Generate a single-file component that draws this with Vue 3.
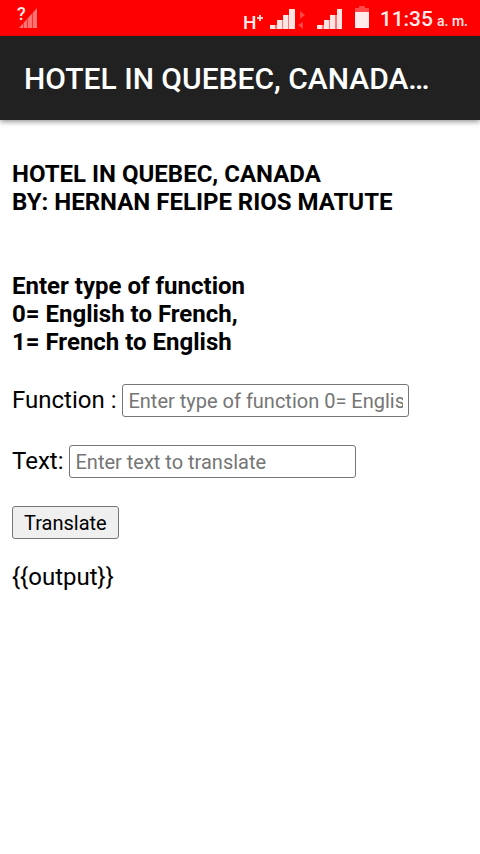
<script setup>
import { ref } from 'vue'

const functionType = ref('')
const text = ref('')
const output = ref('{{output}}')

function translate() {
  output.value = text.value || '{{output}}'
}
</script>

<template>
  <div class="screen">
    <div class="status">
      <svg class="no-sim" width="24" height="32" viewBox="0 -4 24 32" aria-hidden="true">
        <path d="M3 22L21 2V22Z" fill="#ff7373" />
        <path d="M7.500 17V22M11.500 12V22M16.500 7V22" stroke="#ff3030" stroke-width="1" />
        <text class="glyph" x="1" y="14" font-size="18">?</text>
      </svg>
      <svg class="network" width="64" height="36" viewBox="0 -6 64 36" aria-hidden="true">
        <text class="glyph" x="0" y="23" font-size="19">H</text>
        <path d="M14 12H20M17 9V15" stroke="#ffcccc" stroke-width="2" />
        <path d="M27 19H32V23H27ZM34 14H39V23H34ZM40 9H45V23H40ZM46 3H52V23H46Z" fill="#ffe4e4" />
        <path d="M32 19H34V23H32ZM39 14H40V23H39ZM45 9H46V23H45Z" fill="#ff7474" />
        <path d="M57 5L62 9L57 13ZM60 16V23L55 19Z" fill="#ff4545" />
      </svg>
      <svg class="signal" width="26" height="24" viewBox="0 0 26 24" aria-hidden="true">
        <path d="M0 19H5V23H0ZM7 14H12V23H7ZM13 9H18V23H13ZM20 3H25V23H20Z" fill="#ffe4e4" />
        <path d="M5 19H7V23H5ZM12 14H13V23H12ZM18 9H20V23H18Z" fill="#ff7474" />
      </svg>
      <svg class="battery" width="14" height="24" viewBox="0 0 14 24" aria-hidden="true">
        <path d="M4 0H10V2H14V6H0V2H4Z" fill="#ff4949" />
        <path d="M0 6H14V22H0Z" fill="#ffebeb" />
      </svg>
      <div class="clock">11:35<span class="meridiem">a. m.</span></div>
    </div>

    <header class="app-bar">
      <div class="title">HOTEL IN QUEBEC, CANADA…</div>
    </header>

    <main class="content">
      <h1 class="heading">HOTEL IN QUEBEC, CANADA<br>BY: HERNAN FELIPE RIOS MATUTE</h1>
      <h2 class="heading instructions">Enter type of function<br>0= English to French,<br>1= French to English</h2>
      <form class="form" @submit.prevent="translate">
        <div class="row">
          <label for="function-type">Function :</label>
          <input id="function-type" v-model="functionType" class="field" type="text" placeholder="Enter type of function 0= English, 1= French">
        </div>
        <div class="row">
          <label for="source-text">Text:</label>
          <input id="source-text" v-model="text" class="field" type="text" placeholder="Enter text to translate">
        </div>
        <button class="submit" type="submit">Translate</button>
      </form>
      <p class="output">{{ output }}</p>
    </main>
  </div>
</template>

<style>
body {
  background: #fff;
}
</style>

<style scoped>
.screen {
  font-family: Roboto, sans-serif;
  font-size: 24px;
  line-height: 28px;
  color: #000;
}
.status {
  display: flex;
  align-items: center;
  height: 36px;
  padding: 0 12px 0 16px;
  background: #f00;
}
.status svg {
  flex: none;
  overflow: visible;
}
.glyph {
  font-family: Roboto, sans-serif;
  font-weight: 500;
  line-height: 20px;
  fill: #ffebeb;
}
.no-sim {
  margin-right: auto;
}
.network {
  margin-right: 10px;
}
.signal {
  margin-right: 12px;
}
.battery {
  margin-right: 11px;
}
.clock {
  display: flex;
  align-items: baseline;
  gap: 4px;
  padding-top: 4px;
  font-size: 21px;
  font-weight: 500;
  color: #ffebeb;
  white-space: nowrap;
}
.meridiem {
  font-size: 14px;
}
.app-bar {
  display: flex;
  align-items: center;
  height: 84px;
  padding: 0 24px;
  background: #212121;
  box-shadow: 0 2px 5px rgba(0, 0, 0, 0.4);
}
.title {
  overflow: hidden;
  padding-top: 2px;
  font-size: 30px;
  font-weight: 500;
  line-height: 36px;
  color: #fff;
  white-space: nowrap;
}
.content {
  padding: 40px 12px;
}
.heading {
  margin: 0;
  font-size: 24px;
  font-weight: 700;
  line-height: 28px;
}
.instructions {
  margin-top: 56px;
}
.form {
  display: flex;
  flex-direction: column;
  align-items: flex-start;
  gap: 28px;
  margin-top: 28px;
}
.row {
  display: flex;
  align-items: baseline;
  gap: 6px;
  max-width: 100%;
}
.row label {
  flex: none;
}
.field {
  box-sizing: border-box;
  width: 287px;
  min-width: 0;
  height: 33px;
  padding: 2px 5px;
  border: 1px solid #767676;
  border-radius: 3px;
  background: #fff;
  font: 20px Roboto, sans-serif;
  color: #000;
}
.field::placeholder {
  color: #757575;
}
.submit {
  height: 33px;
  padding: 2px 11px;
  border: 1px solid #767676;
  border-radius: 3px;
  background: #efefef;
  font: 20px Roboto, sans-serif;
  color: #000;
}
.output {
  margin: 24px 0 0;
}
</style>
